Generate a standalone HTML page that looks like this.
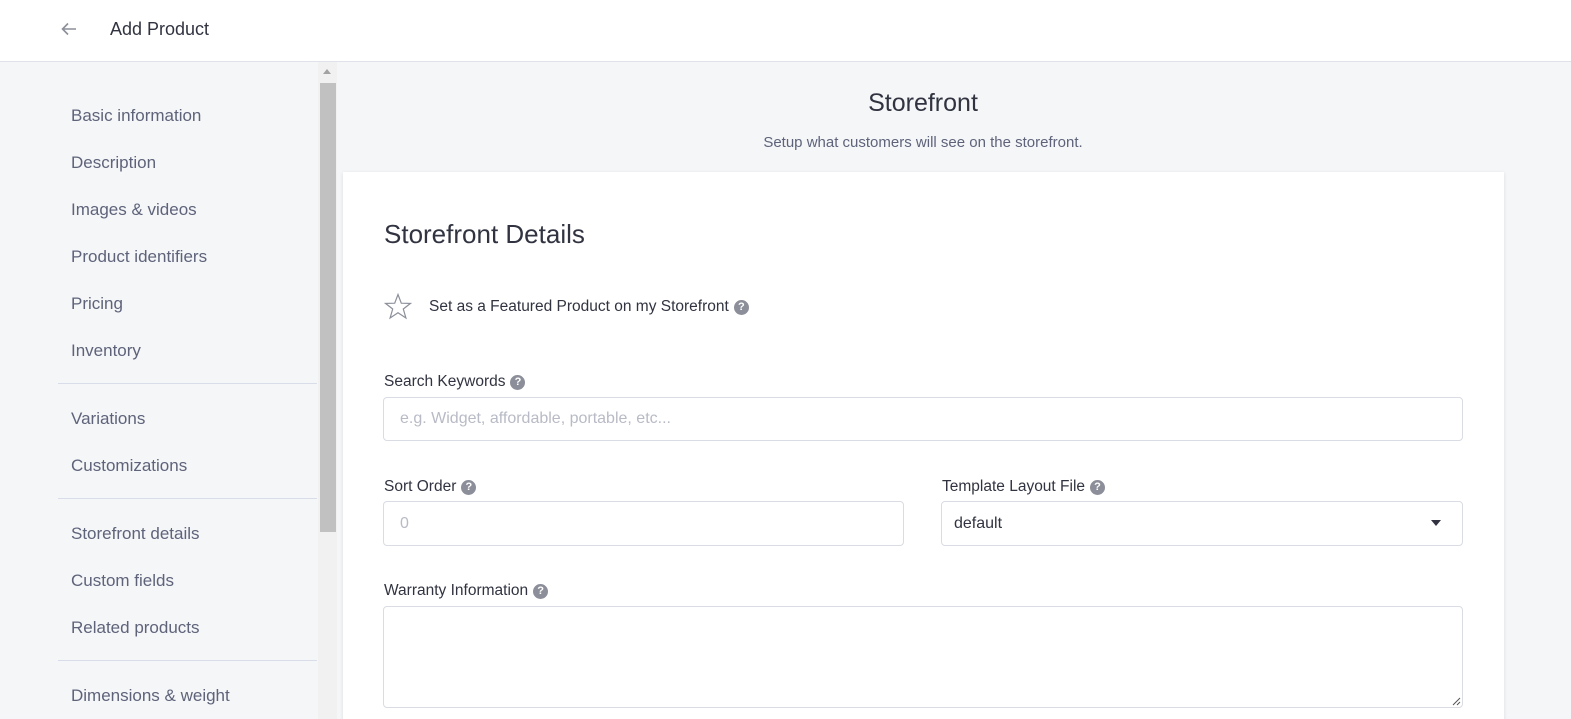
<!DOCTYPE html><html><head><style>
*{box-sizing:border-box;margin:0;padding:0}
html,body{width:1571px;height:719px;overflow:hidden}
body{background:#f5f6f8;font-family:"Liberation Sans",sans-serif;position:relative;color:#313440}
.hdr{position:absolute;left:0;top:0;width:1571px;height:62px;background:#fff;border-bottom:1px solid #dfe2e8}
.hdr .t{position:absolute;left:110px;top:19px;font-size:18px;color:#313440}
.side div.i{position:absolute;left:71px;font-size:17px;color:#5e637a}
.sep{position:absolute;left:58px;width:259px;height:1px;background:#d9dce9}
.sb{position:absolute;left:318px;top:62px;width:19px;height:657px;background:#f1f1f1}
.thumb{position:absolute;left:320px;top:83px;width:16px;height:449px;background:#c1c1c1}
.card{position:absolute;left:343px;top:172px;width:1161px;height:560px;background:#fff;box-shadow:0 1px 4px rgba(0,0,0,.1)}
.a{position:absolute}
.lbl{position:absolute;font-size:15.5px;color:#313440}
.q{display:inline-block;width:15px;height:15px;border-radius:50%;background:#8c8f99;color:#fff;font-size:11px;font-weight:bold;text-align:center;line-height:15px;vertical-align:1px;margin-left:5px}
.in{position:absolute;border:1px solid #d9dce2;border-radius:4px;background:#fff;font-size:16px;padding-left:16px;display:flex;align-items:center}
</style></head><body>
<div class="hdr">
<svg class="a" style="left:60px;top:20px" width="18" height="18" viewBox="0 0 18 18"><path d="M16 9H3M8 3.5L2.5 9 8 14.5" stroke="#8c8f99" stroke-width="1.6" fill="none"/></svg>
<div class="t">Add Product</div></div>
<div class="side">
<div class="i" style="top:106px">Basic information</div>
<div class="i" style="top:153px">Description</div>
<div class="i" style="top:200px">Images &amp; videos</div>
<div class="i" style="top:247px">Product identifiers</div>
<div class="i" style="top:294px">Pricing</div>
<div class="i" style="top:341px">Inventory</div>
<div class="sep" style="top:383px"></div>
<div class="i" style="top:409px">Variations</div>
<div class="i" style="top:456px">Customizations</div>
<div class="sep" style="top:498px"></div>
<div class="i" style="top:524px">Storefront details</div>
<div class="i" style="top:571px">Custom fields</div>
<div class="i" style="top:618px">Related products</div>
<div class="sep" style="top:660px"></div>
<div class="i" style="top:686px">Dimensions &amp; weight</div>
</div>
<div class="sb"></div><div class="thumb"></div>
<svg class="a" style="left:322px;top:68px" width="10" height="8"><path d="M1 6L5 1 9 6Z" fill="#a3a3a3"/></svg>
<div class="a" style="left:337px;width:1172px;top:89px;text-align:center;font-size:25px;color:#313440">Storefront</div>
<div class="a" style="left:337px;width:1172px;top:134px;text-align:center;font-size:15px;color:#5e637a">Setup what customers will see on the storefront.</div>
<div class="card"></div>
<div class="a" style="left:384px;top:219px;font-size:26px;color:#313440">Storefront Details</div>
<svg class="a" style="left:384px;top:293px" width="28" height="27" viewBox="0 0 28 27"><path d="M14 1.5L17.3 10.2 26.5 10.4 19.3 16 21.9 25 14 19.7 6.1 25 8.7 16 1.5 10.4 10.7 10.2Z" fill="none" stroke="#8c8f99" stroke-width="1.2"/></svg>
<div class="lbl" style="left:429px;top:298px">Set as a Featured Product on my Storefront<span class="q">?</span></div>
<div class="lbl" style="left:384px;top:373px">Search Keywords<span class="q">?</span></div>
<div class="in" style="left:383px;top:397px;width:1080px;height:44px;color:#b8bbc5">e.g. Widget, affordable, portable, etc...</div>
<div class="lbl" style="left:384px;top:478px">Sort Order<span class="q">?</span></div>
<div class="in" style="left:383px;top:501px;width:521px;height:45px;color:#b8bbc5">0</div>
<div class="lbl" style="left:942px;top:478px">Template Layout File<span class="q">?</span></div>
<div class="in" style="left:941px;top:501px;width:522px;height:45px;color:#313440;padding-left:12px">default</div>
<svg class="a" style="left:1431px;top:520px" width="10" height="6"><path d="M0 0H10L5 6Z" fill="#313440"/></svg>
<div class="lbl" style="left:384px;top:582px">Warranty Information<span class="q">?</span></div>
<div class="in" style="left:383px;top:606px;width:1080px;height:102px"></div>
<svg class="a" style="left:1451px;top:696px" width="10" height="10"><path d="M9 2L2 9M9 6L6 9" stroke="#555" stroke-width="1"/></svg>
</body></html>
